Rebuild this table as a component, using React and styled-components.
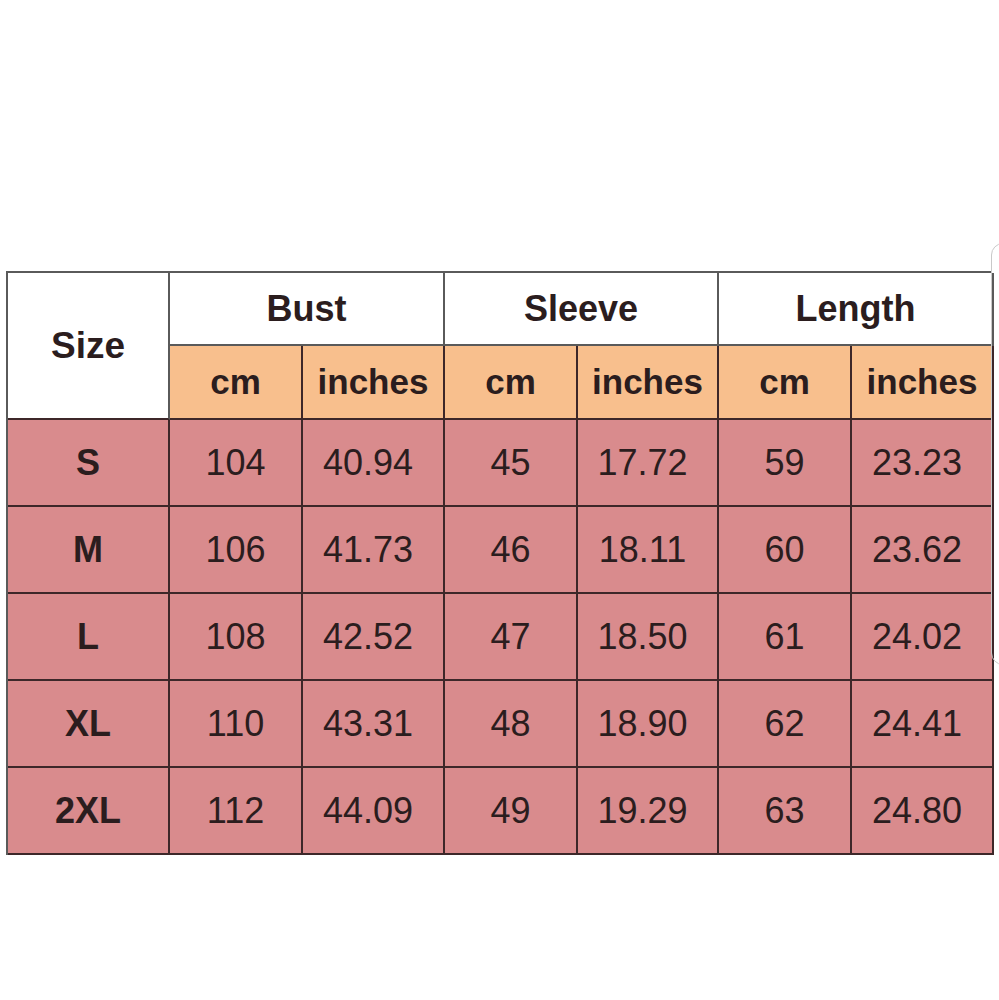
import React from 'react'
import styled, { createGlobalStyle } from 'styled-components'

const colors = {
  text: '#2b1d1e',
  orange: '#f8bf8d',
  pink: '#d98b8d',
  lineDark: '#3d2729',
  lineGrey: '#5a5a5a',
}

const groups = ['Bust', 'Sleeve', 'Length']

const rows = [
  ['S', '104', '40.94', '45', '17.72', '59', '23.23'],
  ['M', '106', '41.73', '46', '18.11', '60', '23.62'],
  ['L', '108', '42.52', '47', '18.50', '61', '24.02'],
  ['XL', '110', '43.31', '48', '18.90', '62', '24.41'],
  ['2XL', '112', '44.09', '49', '19.29', '63', '24.80'],
]

const GlobalStyle = createGlobalStyle`
  html, body {
    margin: 0;
    background: #fff;
    font-family: 'Liberation Sans', Arial, sans-serif;
  }
`

export default function App() {
  return (
    <Page>
      <GlobalStyle />
      <EdgeTab />
      <Table>
        <SizeHead>Size</SizeHead>
        {groups.map((g) => (
          <GroupHead key={g}>{g}</GroupHead>
        ))}
        {groups.map((g) => (
          <React.Fragment key={g}>
            <UnitHead>cm</UnitHead>
            <UnitHead>inches</UnitHead>
          </React.Fragment>
        ))}
        {rows.map((row) =>
          row.map((cell, i) => (
            <BodyCell
              key={row[0] + i}
              $size={i === 0}
              $inches={i > 0 && i % 2 === 0}
            >
              {cell}
            </BodyCell>
          ))
        )}
      </Table>
    </Page>
  )
}

const Page = styled.div`
  position: relative;
  width: 999px;
  height: 1000px;
  padding: 271px 0 0 6px;
  box-sizing: border-box;
  overflow: hidden;
`

const EdgeTab = styled.div`
  position: absolute;
  left: 991px;
  top: 243px;
  width: 40px;
  height: 420px;
  border: 1px solid #c9c9c9;
  border-radius: 12px 0 0 12px;
`

const Table = styled.div`
  display: grid;
  grid-template-columns: 162px 133px 142px 133px 141px 133px 142px;
  grid-template-rows: 73px 74px repeat(5, 87px);
  width: 986px;
  border-top: 2px solid ${colors.lineGrey};
  border-left: 2px solid ${colors.lineGrey};
  box-sizing: border-box;
  color: ${colors.text};
`

const Cell = styled.div`
  display: flex;
  align-items: center;
  justify-content: center;
  box-sizing: border-box;
  border-right: 2px solid ${colors.lineDark};
  border-bottom: 2px solid ${colors.lineDark};
  font-size: 36px;
`

const SizeHead = styled(Cell)`
  grid-row: 1 / 3;
  background: #fff;
  font-weight: 700;
  font-size: 37px;
  border-right-color: ${colors.lineGrey};
  border-bottom-color: ${colors.lineDark};
`

const GroupHead = styled(Cell)`
  grid-column: span 2;
  background: #fff;
  font-weight: 700;
  border-right-color: ${colors.lineGrey};
  border-bottom-color: ${colors.lineGrey};
`

const UnitHead = styled(Cell)`
  background: ${colors.orange};
  font-weight: 700;
  font-size: 35px;
`

const BodyCell = styled(Cell)`
  background: ${colors.pink};
  font-weight: ${(p) => (p.$size ? 700 : 400)};
  padding-right: ${(p) => (p.$inches ? '10px' : '0')};
`
